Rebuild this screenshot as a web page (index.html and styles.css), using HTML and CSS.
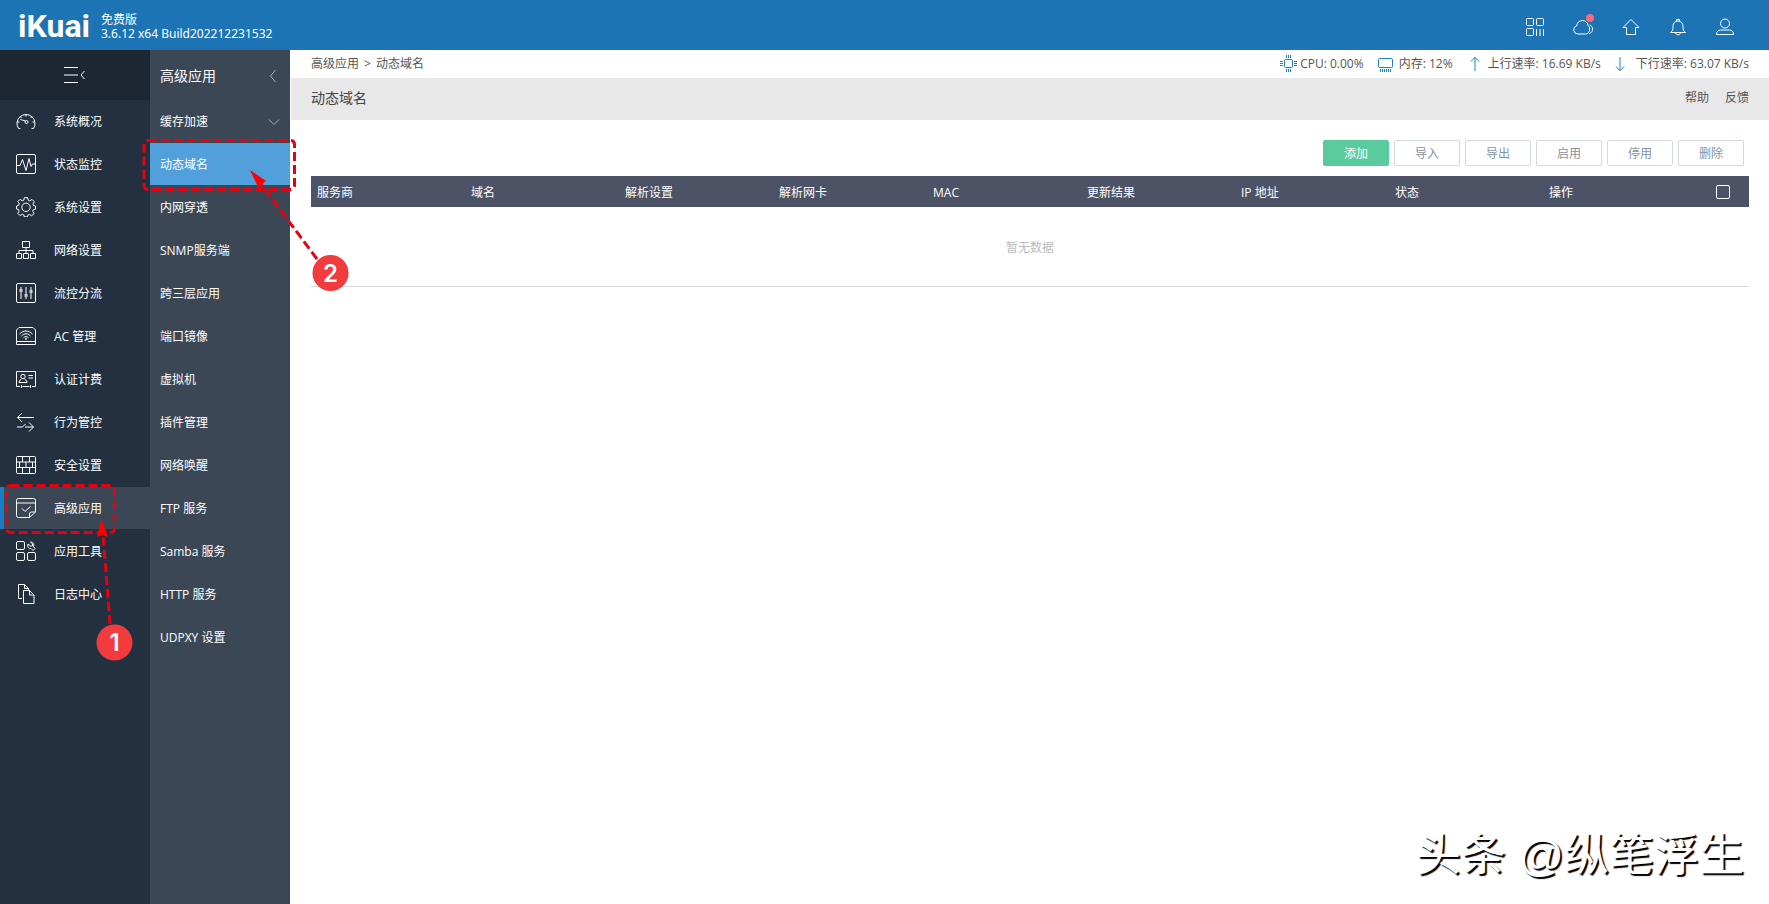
FILE: index.html
```html
<!DOCTYPE html>
<html lang="zh-CN">
<head>
<meta charset="utf-8">
<title>iKuai - 动态域名</title>
<link rel="stylesheet" href="styles.css">
</head>
<body>
<header class="topbar">
  <div class="logo">iKuai</div>
  <div class="version"><span>免费版</span><span class="build">3.6.12 x64 Build202212231532</span></div>
  <nav class="topicons" aria-label="快捷入口">
    <button type="button" aria-label="二维码"><svg width="20" height="20" viewBox="0 0 20 20"><rect x="1.5" y="1.5" width="7" height="7" rx="1"/><rect x="11.5" y="1.5" width="7" height="7" rx="1"/><rect x="1.5" y="11.5" width="7" height="7" rx="1"/><path d="M11.500 12v7M15 12v7M18.500 12v7"/></svg></button>
    <button type="button" aria-label="云服务" class="has-dot"><svg width="22" height="20" viewBox="0 0 22 20"><path d="M6 17H5.500a4.200 4.200 0 0 1-.8-8.200C5 5.500 7.500 3.500 10.500 3.500c3.300 0 5.300 2.300 5.500 5 1.500 1.200 2 3 1.500 5-.6 2.200-2 3.500-4 3.500zM17.500 8c4 1 4.500 7-.5 8.800"/></svg><i class="dot"></i></button>
    <button type="button" aria-label="首页"><svg width="20" height="20" viewBox="0 0 20 20"><path d="M10 2.500L2 10.500h3.500v7h9v-7H18z"/></svg></button>
    <button type="button" aria-label="通知"><svg width="20" height="20" viewBox="0 0 20 20"><path d="M2.500 15.500h15c-2-1.500-2.500-2.500-2.500-6 0-3.300-2-5.500-5-5.500S5 6.200 5 9.500c0 3.500-.5 4.500-2.500 6zM8.500 4V2.500h3V4M7.500 15.500c0 3 5 3 5 0"/></svg></button>
    <button type="button" aria-label="用户"><svg width="20" height="20" viewBox="0 0 20 20"><circle cx="10" cy="6.500" r="4.500"/><path d="M1.500 17.500c0-3 2-4.500 4-4.500h9c2 0 4 1.500 4 4.500z"/></svg></button>
  </nav>
</header>
<div class="shell">
  <nav class="side" aria-label="主菜单">
    <button type="button" class="toggle" aria-label="收起菜单"><svg width="22" height="18" viewBox="0 0 22 18"><path d="M0 1.500h14M0 9h14M0 16.500h14M20.500 5L17 9l3.500 4"/></svg></button>
    <ul class="menu">
      <li><a href="#"><svg viewBox="0 0 20 20"><path d="M4.500 17.500H2.500a9 9 0 1 1 15 0h-2M10 3v2.500M1 11h2.500M16.500 11H19M4 5.500l1.500 1.500M16 5.500L14.500 7M4.500 8.500l5 1.500"/><circle cx="10.500" cy="11" r="1.500"/></svg>系统概况</a></li>
      <li><a href="#"><svg viewBox="0 0 20 20"><rect x=".5" y=".5" width="19" height="19" rx="1.500"/><path d="M1 11.500h3L6.500 5.500l3.500 11 3-12 2 8 1.500-2.500H19"/></svg>状态监控</a></li>
      <li><a href="#"><svg viewBox="0 0 20 20"><path d="M8.300.7h3.400l.5 2.500 1.600.7 2.200-1.500 2.300 2.400-1.400 2.200.6 1.500 2 .5v3.200l-2.200.5-.6 1.600 1.400 2.200-2.400 2.300-2.200-1.400-1.500.6-.5 1.800H8.300l-.5-2-1.500-.6-2.200 1.400-2.300-2.300 1.400-2.200-.7-1.600-1.900-.4V9l2.100-.7.6-1.500-1.400-2.200 2.300-2.300L6.200 3.800l1.600-.6z"/><circle cx="10" cy="10.300" r="4.200"/></svg>系统设置</a></li>
      <li><a href="#"><svg viewBox="0 0 20 20"><path d="M6.500 1.500h7v6h-7zM.5 13.500h5v5h-5zM7.500 13.500h5v5h-5zM14.500 13.500h5v5h-5zM10 7.500v6M3 13.500v-3h14v3"/></svg>网络设置</a></li>
      <li><a href="#"><svg viewBox="0 0 20 20"><rect x=".5" y=".5" width="19" height="19" rx="1.500"/><path d="M5 4v12M10 4v12M15 4v12"/><path class="solid" d="M3.500 6h3v3h-3zM8.500 11h3v3h-3zM13.500 7h3v3h-3z"/></svg>流控分流</a></li>
      <li><a href="#"><svg viewBox="0 0 20 20"><path d="M3 1.500h14l2.500 2.500v14.500H.5V4zM.5 15.500h19M3.500 8c4-4 9-4 13 0M5.500 10c3-3 6-3 9 0M7.500 11.800c1.600-1.600 3.400-1.600 5 0"/><circle cx="10" cy="13" r=".6"/></svg>AC 管理</a></li>
      <li><a href="#"><svg viewBox="0 0 20 20"><path d="M4 17.500H.5v-15h19v15H16M6.500 17.500h7M5.500 16v3M14.500 16v3M12.500 6.500H17M12.500 9H17"/><circle cx="7" cy="7.500" r="2.200"/><path d="M3 13.500c0-2.500 2-2.500 2.800-3.800M11 13.500c0-2.500-2-2.500-2.800-3.800M3 13.500h8"/></svg>认证计费</a></li>
      <li><a href="#"><svg viewBox="0 0 20 20"><path d="M18 5.500H1.500M6 1L1.500 5.500 6 10M1 15h5.500l3-3M9 15h8.500M13 10.500l4.500 4.500-4.500 4.500"/></svg>行为管控</a></li>
      <li><a href="#"><svg viewBox="0 0 20 20"><rect x=".5" y="1.500" width="19" height="17" rx="1"/><path d="M.5 7h19M.5 12.500h19M6.500 1.500V7M13.500 1.500V7M3.500 7v5.500M10 7v5.500M16.500 7v5.500M6.500 12.500v6M13.500 12.500v6"/></svg>安全设置</a></li>
      <li><a href="#" class="current" aria-current="page"><svg viewBox="0 0 20 20"><path d="M13.500 19.500h-11a2 2 0 0 1-2-2v-15a2 2 0 0 1 2-2h15a2 2 0 0 1 2 2V14zM.5 5h19M13.500 19.500V16a2 2 0 0 1 2-2h4M6 10.500l3 3 5.500-5"/></svg>高级应用</a></li>
      <li><a href="#"><svg viewBox="0 0 20 20"><rect x=".5" y=".5" width="8" height="8" rx="1.500"/><rect x=".5" y="11.500" width="8" height="8" rx="1.500"/><rect x="11.500" y="11.500" width="8" height="8" rx="1.500"/><path d="M14.500 1l2 2v2h-2l-2.500-2c-1 3 1 5 3 4.500l2 2 2-2-1.500-2c1-2-.5-4.500-3-4.500z"/></svg>应用工具</a></li>
      <li><a href="#"><svg viewBox="0 0 20 20"><path d="M6 14.500H2.500V.5h6l4 4V6M8.500.5v4h4M7.500 6.500h6l4.500 4.500v8.500H7.500zM13.500 6.500V11H18"/></svg>日志中心</a></li>
    </ul>
  </nav>
  <nav class="sub" aria-label="高级应用">
    <div class="sub-head"><span>高级应用</span><svg width="8" height="14" viewBox="0 0 8 14"><path d="M6.500 1L1.500 7l5 6"/></svg></div>
    <ul class="menu">
      <li><a href="#"><span>缓存加速</span><svg width="12" height="8" viewBox="0 0 12 8"><path d="M1 1.500l5 5 5-5"/></svg></a></li>
      <li><a href="#" class="current" aria-current="page">动态域名</a></li>
      <li><a href="#">内网穿透</a></li>
      <li><a href="#">SNMP服务端</a></li>
      <li><a href="#">跨三层应用</a></li>
      <li><a href="#">端口镜像</a></li>
      <li><a href="#">虚拟机</a></li>
      <li><a href="#">插件管理</a></li>
      <li><a href="#">网络唤醒</a></li>
      <li><a href="#">FTP 服务</a></li>
      <li><a href="#">Samba 服务</a></li>
      <li><a href="#">HTTP 服务</a></li>
      <li><a href="#">UDPXY 设置</a></li>
    </ul>
  </nav>
  <main class="main">
    <div class="infobar">
      <div class="crumbs"><span>高级应用</span><span class="sep">&gt;</span><span>动态域名</span></div>
      <ul class="stats">
        <li class="cpu"><svg width="17" height="18" viewBox="0 0 17 18"><rect x="4.500" y="4.500" width="8" height="8" rx="1"/><path d="M6.500 0v3M8.500 0v3M10.500 0v3M6.500 14v3M8.500 14v3M10.500 14v3M0 6.500h3M0 8.500h3M0 10.500h3M14 6.500h3M14 8.500h3M14 10.500h3"/></svg>CPU: 0.00%</li>
        <li class="mem"><svg width="16" height="18" viewBox="0 0 16 18"><rect x=".5" y="3.500" width="14" height="9" rx="1"/><path d="M2.500 14v3M4.500 14v3M6.500 14v3M8.500 14v3M10.500 14v3M12.500 14v3"/></svg>内存: 12%</li>
        <li class="rate"><svg width="10" height="16" viewBox="0 0 10 16"><path d="M5 15V1.500M.8 5.500L5 1.300l4.200 4.200"/></svg>上行速率: 16.69 KB/s</li>
        <li class="rate down"><svg width="10" height="16" viewBox="0 0 10 16"><path d="M5 1v13.500M.8 10.500L5 14.700l4.200-4.200"/></svg>下行速率: 63.07 KB/s</li>
      </ul>
    </div>
    <div class="titlebar">
      <h1>动态域名</h1>
      <div class="help"><a href="#">帮助</a><a href="#">反馈</a></div>
    </div>
    <section class="content">
      <div class="actions">
        <button type="button" class="primary">添加</button>
        <button type="button">导入</button>
        <button type="button">导出</button>
        <button type="button">启用</button>
        <button type="button">停用</button>
        <button type="button">删除</button>
      </div>
      <table class="grid">
        <thead>
          <tr><th>服务商</th><th>域名</th><th>解析设置</th><th>解析网卡</th><th>MAC</th><th>更新结果</th><th>IP 地址</th><th>状态</th><th>操作</th><th class="pick"><input type="checkbox" aria-label="全选"></th></tr>
        </thead>
        <tbody>
          <tr><td colspan="10">暂无数据</td></tr>
        </tbody>
      </table>
    </section>
  </main>
</div>
<svg class="marks" width="360" height="680" viewBox="0 0 360 680" aria-hidden="true">
  <g class="dash">
    <rect x="6.500" y="485.500" width="108" height="47" rx="4"/>
    <rect x="144" y="140.500" width="150.500" height="49" rx="4"/>
    <path d="M110 624L103 534M317 259L261 184"/>
  </g>
  <path class="head" d="M101.500 519l6.500 18-6-2-5 2zM250 170l16 11-4 3-3 5z"/>
  <circle cx="114.500" cy="642.500" r="18"/>
  <circle cx="330.500" cy="273" r="18"/>
  <text x="114.500" y="651">1</text>
  <text x="330.500" y="282">2</text>
</svg>
<div class="watermark">头条 @纵笔浮生</div>
</body>
</html>
```

FILE: styles.css
```css
* { box-sizing: border-box; }
body {
  margin: 0;
  min-height: 100vh;
  display: flex;
  flex-direction: column;
  position: relative;
  background: #fff;
  color: #555;
  font: 12px/18px "Open Sans", "Noto Sans CJK SC", sans-serif;
}
ul { list-style: none; margin: 0; padding: 0; }
a { color: inherit; text-decoration: none; }
button { font: inherit; color: inherit; cursor: pointer; }
svg { display: block; fill: none; stroke: currentColor; flex: none; }

.topbar {
  display: flex;
  align-items: center;
  height: 50px;
  padding: 0 34px 0 18px;
  background: #1c74b4;
  color: #fff;
}
.logo { font: bold 32px/50px Roboto, sans-serif; width: 83px; padding-top: 2px; }
.version { display: flex; flex-direction: column; line-height: 14px; padding-top: 3px; }
.build { font-family: "Noto Sans", sans-serif; }
.topicons { display: flex; gap: 27px; margin-left: auto; padding-top: 4px; }
.topicons button { display: flex; padding: 0; border: 0; background: none; position: relative; }
.dot { position: absolute; top: -3px; right: 0; width: 8px; height: 8px; border-radius: 50%; background: #fb6a74; }

.shell { display: flex; flex: 1; }
.side { flex: 0 0 150px; background: #223040; color: #fff; }
.toggle {
  display: flex;
  align-items: center;
  justify-content: center;
  width: 100%;
  height: 50px;
  padding: 0;
  border: 0;
  background: #1c2733;
}
.menu li { margin-bottom: 1px; }
.menu a { display: flex; align-items: center; height: 42px; padding-top: 2px; }
.side .menu a { padding-left: 12px; border-left: 4px solid transparent; gap: 18px; }
.side .menu svg { width: 20px; height: 20px; margin-bottom: 2px; }
.side .menu .current { background: #3b4755; border-left-color: #1c7cc0; }
.solid { fill: #c8ced4; stroke: none; }

.sub { flex: 0 0 140px; background: #3b4755; color: #fff; }
.sub-head { display: flex; align-items: center; justify-content: space-between; height: 50px; padding: 2px 13px 0 10px; font-size: 14px; }
.sub svg { color: #a9b1ba; }
.sub .menu a { justify-content: space-between; padding: 2px 10px 0; }
.sub .menu .current { background: #519fdb; }

.main { flex: 1; min-width: 0; padding-left: 1px; }
.infobar { display: flex; align-items: center; justify-content: space-between; height: 28px; padding: 0 20px; }
.crumbs { display: flex; gap: 5px; }
.stats { display: flex; }
.stats li { display: flex; align-items: center; }
.stats svg { color: #1c84c6; }
.cpu { gap: 3px; }
.mem { gap: 5px; margin-left: 14px; }
.rate { gap: 8px; margin-left: 17px; }
.down { gap: 11px; margin-left: 14px; }
.titlebar { display: flex; align-items: center; justify-content: space-between; height: 42px; padding: 0 20px 2px; background: #e8e8e8; }
.titlebar h1 { margin: 0; font-size: 14px; font-weight: normal; color: #444; }
.help { display: flex; gap: 16px; }
.content { padding: 20px; }
.actions { display: flex; justify-content: flex-end; gap: 5px; padding-right: 5px; margin-bottom: 10px; }
.actions button { width: 66px; height: 26px; padding: 1px 0 0; border: 1px solid #d5dade; border-radius: 2px; background: #fff; color: #8792a0; }
.actions .primary { background: #5aca9f; border-color: #5aca9f; color: #fff; }
.grid { width: 100%; table-layout: fixed; border-collapse: collapse; }
.grid th { height: 31px; padding: 2px 6px 0; background: #4d5366; color: #fff; font-weight: normal; text-align: left; }
.grid .pick { width: 52px; padding: 0; }
.grid td { height: 79px; padding: 4px 0 0; border-bottom: 1px solid #d8d8d8; color: #bbb; text-align: center; }
.pick input { appearance: none; display: block; width: 14px; height: 14px; margin: 0 auto; border: 1px solid #fff; border-radius: 2px; }

.marks { position: absolute; left: 0; top: 0; pointer-events: none; stroke: none; }
.dash { stroke: #e60012; stroke-width: 3; stroke-dasharray: 9 4; }
.head { fill: #f00; }
.marks circle { fill: #f23b3d; }
.marks text { fill: #fff; font: 600 24px Inter, sans-serif; text-anchor: middle; }
.watermark {
  position: absolute;
  right: 25px;
  bottom: 20px;
  font: 45px/56px "Liberation Sans", "Noto Sans CJK SC", sans-serif;
  color: #fff;
  text-shadow: 2px 2px 1px #000;
}
```
